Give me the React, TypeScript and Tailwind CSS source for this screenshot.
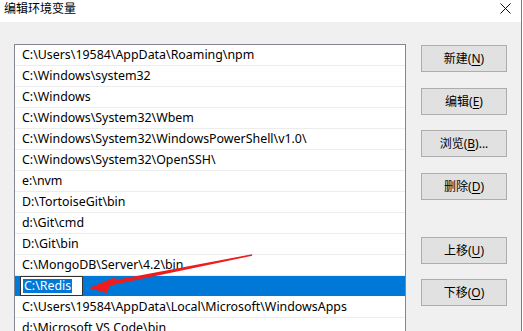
import React from 'react';

const paths = [
    'C:\\Users\\19584\\AppData\\Roaming\\npm',
    'C:\\Windows\\system32',
    'C:\\Windows',
    'C:\\Windows\\System32\\Wbem',
    'C:\\Windows\\System32\\WindowsPowerShell\\v1.0\\',
    'C:\\Windows\\System32\\OpenSSH\\',
    'e:\\nvm',
    'D:\\TortoiseGit\\bin',
    'd:\\Git\\cmd',
    'D:\\Git\\bin',
    'C:\\MongoDB\\Server\\4.2\\bin',
    'C:\\Redis',
    'C:\\Users\\19584\\AppData\\Local\\Microsoft\\WindowsApps',
    'd:\\Microsoft VS Code\\bin',
];

const SELECTED = 11;

// label before the hotkey, hotkey letter, trailing text
const buttons: { label: string; key: string; tail?: string; mt: string }[] = [
    { label: '新建', key: 'N', mt: 'mt-px' },
    { label: '编辑', key: 'E', mt: 'mt-[16px]' },
    { label: '浏览', key: 'B', tail: '...', mt: 'mt-[15px]' },
    { label: '删除', key: 'D', mt: 'mt-[16px]' },
    { label: '上移', key: 'U', mt: 'mt-[37px]' },
    { label: '下移', key: 'O', mt: 'mt-[15px]' },
];

const font = { fontFamily: '"Noto Sans", "Noto Sans CJK SC", sans-serif' };

const App = () => {
    return (
        <div className="relative w-[523px] h-[331px] overflow-hidden bg-white text-[12.4px] text-black" style={font}>
            <div className="flex flex-col w-[522px] h-full border-r border-[#7a7a7a]">
                {/* title bar */}
                <div className="flex shrink-0 items-start justify-between h-[22px] bg-white pl-[4px] pr-[10px] pt-[2px]">
                    <span className="text-[12px] leading-[14px]">编辑环境变量</span>
                    <svg width="11" height="11" viewBox="0 0 11 11" className="mt-px">
                        <path d="M0.5 0.5 L10.5 10.5 M10.5 0.5 L0.5 10.5" stroke="#111" strokeWidth="1" />
                    </svg>
                </div>

                <div className="flex flex-1 min-h-0 overflow-hidden bg-[#f0f0f0] pl-[14px] pt-[22px]">
                    {/* path list */}
                    <div className="w-[392px] h-[320px] shrink-0 border border-[#828790] bg-white">
                        {paths.map((p, i) =>
                            i === SELECTED ? (
                                <div key={i} className="flex items-center h-[21px] bg-[#0078d7] pl-[5px] border-b border-white">
                                    <div className="flex items-center w-[63px] h-[20px] border border-[#333] bg-white pl-[2px]">
                                        <span className="bg-[#0078d7] text-white leading-[14px] px-px">{p}</span>
                                    </div>
                                </div>
                            ) : (
                                <div key={i} className="flex items-center h-[21px] pl-[7px] border-b border-[#ececec] whitespace-nowrap">
                                    {p}
                                </div>
                            )
                        )}
                    </div>

                    {/* buttons */}
                    <div className="flex flex-col ml-[15px] text-[12px]">
                        {buttons.map((b) => (
                            <div
                                key={b.key}
                                className={`flex shrink-0 items-center justify-center w-[86px] h-[27px] border border-[#adadad] bg-[#e1e1e1] ${b.mt}`}
                            >
                                {b.label}(<span className="underline underline-offset-2">{b.key}</span>){b.tail}
                            </div>
                        ))}
                    </div>
                </div>
            </div>

            {/* red annotation arrow */}
            <svg className="absolute left-0 top-0 pointer-events-none" width="523" height="331">
                <polygon
                    points="252,254.3 252.2,255.7 110,285.5 107,293 89,288 117,276.5 113,280.5"
                    fill="#ee1c1c"
                />
            </svg>
        </div>
    );
};

export default App;
